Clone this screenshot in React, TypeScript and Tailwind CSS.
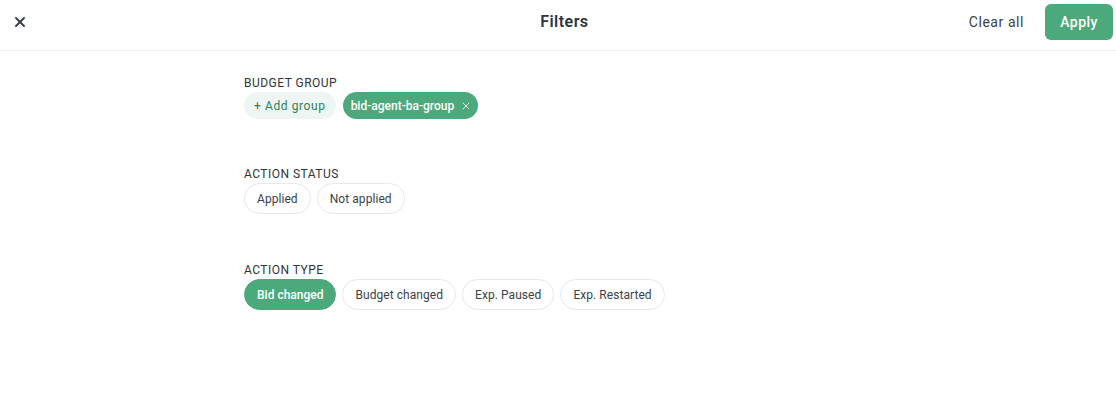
import { X } from "lucide-react";

const font = { fontFamily: "Roboto, 'Noto Sans', sans-serif" };

function Chip({ label, active }: { label: string; active?: boolean }) {
  return (
    <button
      className={
        active
          ? "h-[31px] px-3 rounded-full bg-[#4ca97b] border border-[#4ca97b] text-[12px] font-medium text-white"
          : "h-[31px] px-3 rounded-full bg-white border border-[#e6e8ee] text-[12px] tracking-[0.005em] text-[#3b3f4c]"
      }
    >
      {label}
    </button>
  );
}

function Label({ children }: { children: React.ReactNode }) {
  return <div className="text-[12px] tracking-[0.04em] text-[#2f3340] leading-[16px]">{children}</div>;
}

export default function App() {
  return (
    <div className="w-[1116px] h-[401px] bg-white" style={font}>
      <header className="h-[51px] border-b border-[#ececf2]">
        <div className="h-[44px] flex items-center pl-[12px] pr-[3px]">
          <button className="w-[16px] h-[16px] flex items-center justify-center text-[#3c404d]">
            <X size={18} strokeWidth={3} />
          </button>
          <div className="flex-1 text-center text-[16px] font-semibold tracking-[0.03em] text-[#2f3340] pl-[132px]">Filters</div>
          <button className="text-[14px] text-[#3b3f4c] mr-[21px] tracking-[0.04em]">Clear all</button>
          <button className="h-[36px] w-[68px] rounded-[6px] bg-[#4ca97b] text-white text-[14px] font-medium tracking-[0.03em]">
            Apply
          </button>
        </div>
      </header>

      <main className="pl-[244px] pt-[24px] flex flex-col">
        <div className="flex flex-col gap-[1px]">
          <Label>BUDGET GROUP</Label>
          <div className="flex gap-[7px] mb-[1px]">
            <button className="h-[27px] px-[10px] rounded-full bg-[#edf6f2] text-[12px] text-[#347f5b] tracking-[0.05em]">
              + Add group
            </button>
            <div className="h-[27px] pl-[8px] pr-[6px] rounded-full bg-[#4ca97b] text-white text-[12px] font-medium flex items-center gap-[6px]">
              bid-agent-ba-group
              <X size={12} strokeWidth={2} className="text-[#dcefe5]" />
            </div>
          </div>
        </div>

        <div className="mt-[46px] flex flex-col gap-[1px]">
          <Label>ACTION STATUS</Label>
          <div className="flex gap-[6px]">
            <Chip label="Applied" />
            <Chip label="Not applied" />
          </div>
        </div>

        <div className="mt-[48px] flex flex-col gap-[1px]">
          <Label>ACTION TYPE</Label>
          <div className="flex gap-[6px]">
            <Chip label="Bid changed" active />
            <Chip label="Budget changed" />
            <Chip label="Exp. Paused" />
            <Chip label="Exp. Restarted" />
          </div>
        </div>
      </main>
    </div>
  );
}
